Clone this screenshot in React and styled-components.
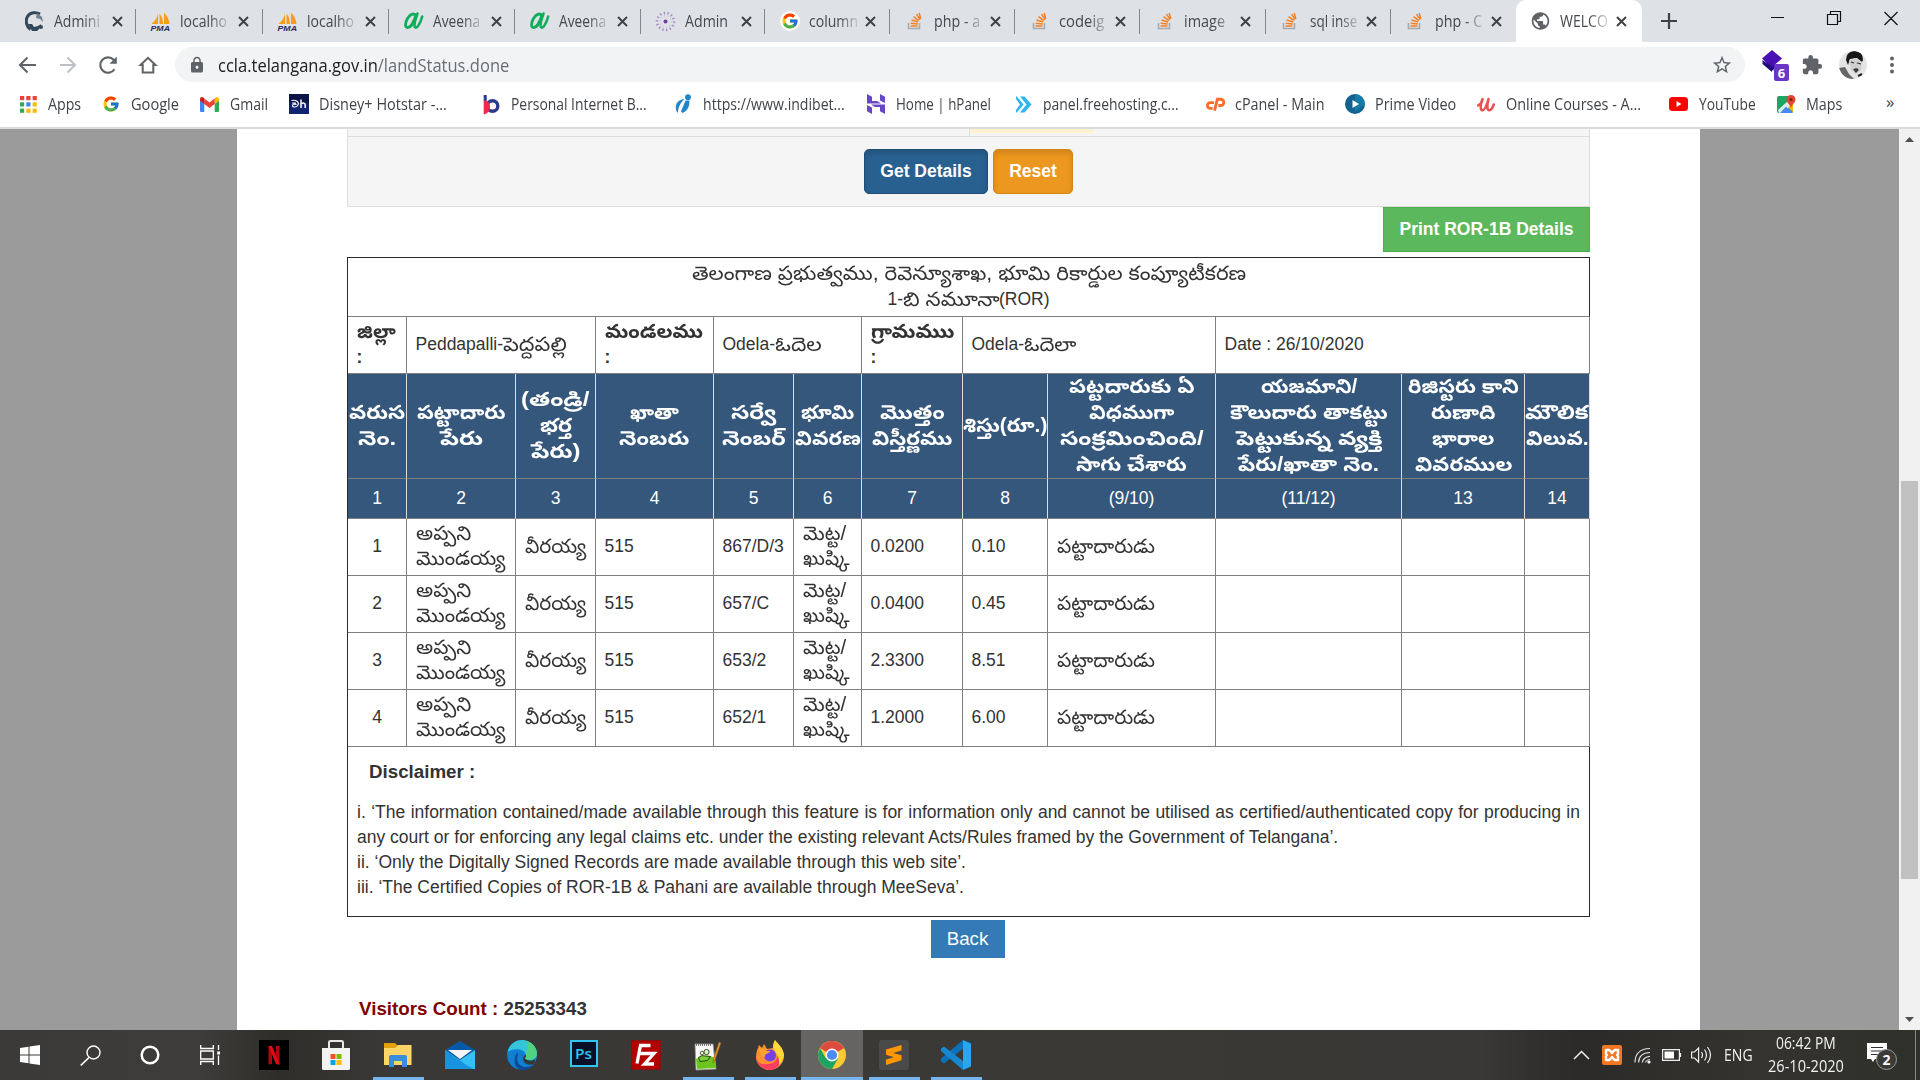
import React, { useLayoutEffect, useRef, useState } from "react";
import styled, { createGlobalStyle, css } from "styled-components";
import { FcGoogle } from "react-icons/fc";
import { MdExtension, MdLock, MdStarBorder, MdPublic } from "react-icons/md";

const Global = createGlobalStyle`
  * { box-sizing: border-box; }
  html, body { margin: 0; padding: 0; overflow: hidden; background: #fff; }
`;

const ui = css`font-family: "Open Sans", "Noto Sans", sans-serif;`;
const doc = css`font-family: "Liberation Sans", "Noto Sans Telugu", "Noto Sans", sans-serif;`;

/* ---------- text that keeps a set measure ---------- */
const FitBox = styled.span`
  display: inline-block;
  white-space: nowrap;
  text-align: left;
  vertical-align: top;
  font-size: ${(p) => (p.$te ? "19.5px" : "inherit")};
`;
const FitInner = styled.span`
  display: inline-block;
  white-space: pre;
  transform-origin: 0 50%;
`;
function Fit({ w, te, children }) {
  const ref = useRef(null);
  const [k, setK] = useState(1);
  useLayoutEffect(() => {
    const n = ref.current.offsetWidth;
    if (n) setK(w / n);
  }, [w, children]);
  return (
    <FitBox $te={te} style={{ width: w }}>
      <FitInner ref={ref} style={{ transform: `scaleX(${k})` }}>{children}</FitInner>
    </FitBox>
  );
}

/* ---------- shell ---------- */
const Screen = styled.div`
  width: 1920px;
  height: 1080px;
  display: flex;
  flex-direction: column;
  overflow: hidden;
  background: #fff;
`;

/* ---------- tab strip ---------- */
const TabStrip = styled.div`
  ${ui}
  height: 42px;
  flex: none;
  display: flex;
  background: #dee1e6;
  padding-left: 10px;
  color: #45494d;
`;
const TabItem = styled.div`
  flex: none;
  width: ${(p) => p.$w}px;
  height: 42px;
  padding-left: 14px;
  display: flex;
  align-items: center;
  background: ${(p) => (p.$active ? "#fff" : "transparent")};
  border-radius: ${(p) => (p.$active ? "10px 10px 0 0" : "0")};
`;
const TabIcon = styled.span`
  width: 21px;
  height: 21px;
  display: flex;
  align-items: center;
  justify-content: center;
`;
const TabText = styled.span`
  margin-left: 9px;
  width: 49px;
  font-size: 15.5px;
  line-height: 24px;
  white-space: nowrap;
  mask-image: ${(p) => (p.$solid ? "none" : "linear-gradient(90deg, #000 60%, rgba(0,0,0,.15) 100%)")};
`;
const TabClose = styled.svg`
  margin-left: ${(p) => p.$gap}px;
  width: 11px;
  height: 11px;
  flex: none;
`;
const TabRule = styled.span`
  width: 1px;
  height: 25px;
  margin-left: auto;
  background: ${(p) => (p.$hide ? "transparent" : "#83868b")};
`;
const NewTab = styled.svg`
  width: 16px;
  height: 16px;
  margin: 13px 0 0 19px;
`;
const WindowButtons = styled.svg`
  margin-left: auto;
  width: 160px;
  height: 42px;
`;

/* ---------- toolbar ---------- */
const Toolbar = styled.div`
  ${ui}
  flex: none;
  height: 45px;
  padding: 0 10px 0 17px;
  display: flex;
  align-items: center;
`;
const NavIcon = styled.svg`
  width: 20px;
  height: 20px;
  margin-right: ${(p) => p.$gap || 20.4}px;
  flex: none;
`;
const Omnibox = styled.div`
  flex: none;
  width: 1570px;
  height: 35px;
  border-radius: 18px;
  background: #f1f3f4;
  display: flex;
  align-items: center;
  padding: 0 12px 0 13px;
  color: #5f6368;
  font-size: 18px;
  & > svg:last-child { margin-left: auto; }
`;
const Url = styled.span`
  margin-left: 12px;
  line-height: 30px;
  color: #6a6e73;
`;
const Host = styled.span`color: #202124;`;
const ExtArea = styled.div`
  display: flex;
  align-items: center;
  margin-left: 16px;
`;

/* ---------- bookmarks ---------- */
const Bookmarks = styled.div`
  ${ui}
  flex: none;
  height: 42px;
  padding: 0 0 6px 18px;
  display: flex;
  align-items: center;
  border-bottom: 2px solid #dadce0;
  color: #3f4347;
  font-size: 15.5px;
`;
const Bookmark = styled.div`
  flex: none;
  width: ${(p) => p.$w}px;
  display: flex;
  align-items: center;
  line-height: 24px;
`;
const BookIcon = styled.span`
  width: 20px;
  height: 20px;
  margin-right: 10px;
  display: flex;
  align-items: center;
  justify-content: center;
`;
const More = styled.span`
  font-size: 17px;
  line-height: 20px;
  margin-top: -5px;
  color: #3c4043;
`;

/* ---------- page ---------- */
const Viewport = styled.div`
  ${doc}
  flex: none;
  height: 901px;
  display: flex;
  background: #9b9b9b;
  color: #333;
  font-size: 17.5px;
  line-height: 25px;
`;
const Sheet = styled.main`
  width: 1463px;
  margin-left: 237px;
  padding-left: 110px;
  background: #fff;
`;
const Content = styled.div`
  width: 1243px;
  display: flex;
  flex-direction: column;
`;
const FormTail = styled.div`
  height: 8px;
  display: flex;
  background: #f5f5f5;
  border: 1px solid #ddd;
  border-top: 0;
`;
const FormTailLeft = styled.div`
  width: 622px;
  border-right: 1px solid #ddd;
`;
const Field = styled.div`
  width: 123px;
  height: 4px;
  background: #fff2cc;
`;
const Actions = styled.div`
  height: 70px;
  border: 1px solid #ddd;
  border-top: 0;
  background: #f5f5f5;
  display: flex;
  gap: 5px;
  justify-content: center;
  padding-top: 12px;
`;
const Button = styled.button`
  ${doc}
  height: ${(p) => p.$h || 45}px;
  width: ${(p) => p.$w}px;
  padding: 0;
  font-size: ${(p) => p.$size || 17.5}px;
  font-weight: ${(p) => p.$weight || 700};
  color: #fff;
  background: ${(p) => p.$bg};
  border: 1px solid ${(p) => p.$line};
  border-radius: ${(p) => (p.$round ? "5px" : "0")};
  box-shadow: ${(p) => (p.$round ? "inset 0 3px 5px rgba(0,0,0,.125)" : "none")};
`;
const PrintRow = styled.div`
  display: flex;
  justify-content: flex-end;
  height: 50px;
`;

const Sheet1B = styled.table`
  width: 1243px;
  table-layout: fixed;
  border-collapse: separate;
  border-spacing: 0;
  border-top: 1px solid #2a2a2a;
  border-left: 1px solid #2a2a2a;
`;
const Cell = styled.td`
  height: ${(p) => p.$h}px;
  padding: 0 0 2px ${(p) => (p.$center ? 0 : 8.5)}px;
  text-align: ${(p) => (p.$center ? "center" : "left")};
  font-weight: ${(p) => (p.$bold ? 700 : 400)};
  border-right: 1px solid ${(p) => (p.$edge ? "#2a2a2a" : "#808080")};
  border-bottom: 1px solid #808080;
  vertical-align: middle;
`;
const HeadCell = styled.th`
  height: ${(p) => p.$h}px;
  padding: 0;
  background: #34577b;
  color: #fff;
  font-weight: ${(p) => (p.$plain ? 400 : 700)};
  border-right: 1px solid #ddd;
  border-bottom: 1px solid #808080;
`;
const Lines = styled.div`
  display: flex;
  flex-direction: column;
  align-items: ${(p) => (p.$center ? "center" : "flex-start")};
  line-height: ${(p) => p.$lh || 26}px;
  margin-top: ${(p) => (p.$up ? -2 : 0)}px;
`;
const Mixed = styled.span`
  display: flex;
`;
const Note = styled.td`
  height: 170px;
  padding: 12px 9px 0 8px;
  vertical-align: top;
  border-right: 1px solid #2a2a2a;
  border-bottom: 1px solid #2a2a2a;
`;
const NoteTitle = styled.div`
  font-size: 18.75px;
  font-weight: 700;
  padding-left: 13px;
  margin-bottom: 16px;
`;
const NoteText = styled.p`
  margin: 0 0 0 1px;
  text-align: justify;
`;
const BackRow = styled.div`
  display: flex;
  justify-content: center;
  padding: 3px 2px 38px 0;
`;
const Visitors = styled.div`
  padding-left: 12px;
  font-size: 18.75px;
  font-weight: 700;
`;
const Maroon = styled.span`color: #800000;`;

const Gutter = styled.div`
  margin-left: auto;
  width: 21px;
  background: #f1f1f1;
  display: flex;
  flex-direction: column;
  align-items: center;
  padding: 8px 0;
  & > svg:last-child { margin-top: auto; }
`;
const Thumb = styled.div`
  width: 17px;
  height: 398px;
  margin-top: 339px;
  background: #c1c1c1;
`;

/* ---------- task bar ---------- */
const Taskbar = styled.div`
  ${ui}
  flex: none;
  height: 50px;
  display: flex;
  background: linear-gradient(90deg, #3b3a38 0, #3d3c3a 200px, #2f2d2a 280px, #393836 380px, #3b3936 1100px, #3a3836 1480px, #2c2a28 1580px, #343330 1750px, #30302b 1920px);
  color: #f2f2f2;
`;
const Slot = styled.div`
  flex: none;
  width: ${(p) => p.$w || 62}px;
  height: 50px;
  display: flex;
  flex-direction: column;
  align-items: center;
  justify-content: space-between;
  padding-top: ${(p) => (p.$t === undefined ? 10 : p.$t)}px;
  background: ${(p) => (p.$active ? "#656462" : "transparent")};
`;
const Running = styled.span`
  width: ${(p) => (p.$wide ? 62 : 51)}px;
  height: 3px;
  background: #76b5ee;
`;
const PinGap = styled.span`width: 3px;`;
const Tray = styled.div`
  margin-left: auto;
  width: 350px;
  display: flex;
  align-items: center;
`;
const Lang = styled.span`
  font-size: 15.5px;
  line-height: 20px;
  margin-left: 12px;
`;
const Clock = styled.div`
  width: 108px;
  margin-left: -1px;
  display: flex;
  flex-direction: column;
  align-items: center;
  font-size: 15.5px;
  line-height: 23px;
`;
const DesktopEdge = styled.span`
  width: 1px;
  height: 50px;
  margin-left: 15px;
  background: #8a8986;
`;

/* ---------- favicons ---------- */
const IconCi = () => (
  <svg width="20" height="21" viewBox="0 0 20 21">
    <path d="M15 3C11 .6 5 1.500 2.500 5.500S1.500 16 5.500 18.500" fill="none" stroke="#33475b" strokeWidth="3" />
    <path d="M3 13h4l2 3 4-1 3-2-1 4-3 3H7z" fill="#33475b" />
    <path d="M12 2l5 4 1 5-3-3-4-1z" fill="#71808f" />
    <circle cx="16" cy="16" r="2" fill="#33475b" />
  </svg>
);
const IconPma = () => (
  <svg width="21" height="21" viewBox="0 0 21 21">
    <path d="M8 1C8 6 5 10 1.500 13H8zM9.500 3v10H13C13 9 12 5 9.500 3zM14 2v11h5.500C19 8 17 4 14 2z" fill="#f89c1c" />
    <text x=".5" y="20.300" fontFamily="Liberation Sans, sans-serif" fontSize="8" fontWeight="700" fontStyle="italic" textLength="19.500" lengthAdjust="spacingAndGlyphs" fill="#2c2b5c">PMA</text>
  </svg>
);
const IconAveen = () => (
  <svg width="21" height="18" viewBox="0 0 21 18">
    <path d="M12.500 3.500C10.500.500 7 2.500 4.500 6.500 2 11 1.800 15 4.300 15.500 7.500 16 11 10 13 3" fill="none" stroke="#0fae5b" strokeWidth="2.800" strokeLinecap="round" />
    <path d="M14.500 1.500C12.500 7 10.500 12.500 11.800 15 13.800 17.500 17.500 11 19.200 4.500" fill="none" stroke="#0fae5b" strokeWidth="2.600" strokeLinecap="round" />
  </svg>
);
const IconSpin = () => (
  <svg width="21" height="21" viewBox="0 0 21 21">
    <circle cx="10.500" cy="10.500" r="8.500" fill="none" stroke="#a08abf" strokeWidth="2.600" strokeDasharray="1.300 2.500" />
    <circle cx="10.500" cy="10.500" r="5.800" fill="none" stroke="#c9b8dc" strokeWidth="1.200" strokeDasharray="1 2.600" />
    <circle cx="10.500" cy="10.500" r="2" fill="#6b3fa0" />
  </svg>
);
const IconG = () => (
  <svg width="20" height="20" viewBox="0 0 20 20">
    <circle cx="10" cy="10" r="10" fill="#fff" />
    <FcGoogle x={1} y={1} size={18} />
  </svg>
);
const IconSo = () => (
  <svg width="16" height="18" viewBox="0 0 16 18">
    <path d="M1.500 11v5.500h11V11" fill="none" stroke="#a7abb0" strokeWidth="1.600" />
    <path d="M3.500 14h7M3.700 11.200l7 .8M4.500 8l6.600 2M6.500 4.700l5.500 4M9.500 2.200l3.700 5.500M12.200 1l1.600 6" stroke="#f48024" strokeWidth="1.500" />
  </svg>
);

const TABS = [
  [126.4, "Admini", 46, IconCi], [126.6, "localho", 47, IconPma], [126.4, "localho", 47, IconPma],
  [126, "Aveena", 47, IconAveen], [125.600, "Aveena", 47, IconAveen], [124.500, "Admin", 43, IconSpin],
  [125, "column", 49, IconG], [125, "php - a", 46, IconSo], [125, "codeig", 45, IconSo], [125.500, "image", 41, IconSo],
  [124.600, "sql inse", 47, IconSo], [125, "php - C", 47, IconSo],
];

const CloseGlyph = ({ gap }) => (
  <TabClose $gap={gap} viewBox="0 0 11 11"><path d="M1 1l9 9M10 1l-9 9" stroke="#3f4347" strokeWidth="2" /></TabClose>
);

/* ---------- bookmark icons ---------- */
const BApps = () => (
  <svg width="17" height="17" viewBox="0 0 17 17">
    {["#ea4335", "#ea4335", "#ea4335", "#34a853", "#4285f4", "#fbbc05", "#34a853", "#fbbc05", "#fbbc05"].map((c, i) => (
      <rect key={i} x={(i % 3) * 6.300} y={Math.floor(i / 3) * 6.300} width="4.200" height="4.200" fill={c} />
    ))}
  </svg>
);
const BGmail = () => (
  <svg width="19" height="15" viewBox="0 0 19 15">
    <path d="M0 3v11a1 1 0 0 0 1 1h3.300V6z" fill="#4285f4" /><path d="M19 3v11a1 1 0 0 1-1 1h-3.300V6z" fill="#34a853" />
    <path d="M14.700 1.500V7L19 3.800V2.200C19 .3 17-.6 15.500.6z" fill="#fbbc04" />
    <path d="M4.300 7V1.500L9.500 5.500l5.200-4V7L9.500 11z" fill="#ea4335" /><path d="M0 2.200v1.600L4.300 7V1.500L3.500.6C2-.6 0 .3 0 2.200z" fill="#c5221f" />
  </svg>
);
const BHot = () => (
  <svg width="20" height="20" viewBox="0 0 20 20"><rect width="20" height="20" fill="#10246b" /><rect width="20" height="9" fill="#0a1446" />
    <path d="M2.500 6.500C7 5.500 10.500 8 9 11c-1.300 2.500-5 2.500-5.500 1s2-2.500 4-1.500M3 9h4" fill="none" stroke="#fff" strokeWidth="1.100" /><path d="M12 5.500v8.500M12 10.500c.8-2 4.200-2 4.200.5v3" fill="none" stroke="#fff" strokeWidth="1.500" /></svg>
);
const BPib = () => (
  <svg width="17" height="21" viewBox="0 0 17 21"><circle cx="9.500" cy="12" r="5.300" fill="none" stroke="#2b3990" strokeWidth="3.400" /><path d="M2.200 1v6" stroke="#2b3990" strokeWidth="3" /><path d="M.7 6.500c4 0 6.300 2 6.300 6s-2 7-6.300 8z" fill="#ee2a4a" /></svg>
);
const BIndi = () => (
  <svg width="17" height="20" viewBox="0 0 17 20"><path d="M9.500 5C4 5.500.5 9 .8 14c.2 2 1 4 2.200 5C3 14 5 9 9.500 5z" fill="#1f86cb" /><path d="M10.500 6.500L6 17.500l1.500 1.500c5-2 7.500-7 6.800-12.500z" fill="#1f86cb" /><circle cx="13" cy="3.200" r="2.900" fill="#1f86cb" /></svg>
);
const BHp = () => (
  <svg width="18" height="20" viewBox="0 0 18 20"><path d="M0 0l5 2.700V7h5l4 2.500H0zM13 0l5 2.700V9l-5-2.500zM18 10.500V20l-5-2.700V13H8l-4-2.500zM0 11l5 2.500V20l-5-2.700z" fill="#6747c7" /></svg>
);
const BFree = () => (
  <svg width="17" height="19" viewBox="0 0 17 19"><path d="M5 1.500h4.500l7 8-7 8H5l6.500-8z" fill="#2fb4ec" /><path d="M1 1l3.500 3.500L8.500 9.500l-4 5L1 18l0-3 4-5.500L1 4z" fill="#2fb4ec" /></svg>
);
const BCp = () => (
  <svg width="21" height="15" viewBox="0 0 21 15"><path d="M9.500 5.500H5.500a3 3 0 0 0 0 6H8M10 14l3-12h3.500a3.300 3.300 0 0 1 0 6.600H14" fill="none" stroke="#ff6c2c" strokeWidth="3" /></svg>
);
const BPrime = () => (
  <svg width="20" height="20" viewBox="0 0 20 20"><circle cx="10" cy="10" r="10" fill="#126390" /><path d="M10 0a10 10 0 0 1 10 10L10 18z" fill="#1786b0" opacity=".7" /><path d="M7.500 6l6.500 4-6.500 4z" fill="#fff" /></svg>
);
const BUd = () => (
  <svg width="18" height="15" viewBox="0 0 18 15"><path d="M1 8.500C3.500 7 5.500 4 5.500 2 3.500 6 3 13 5.200 13.300 7.500 13.500 10 7.500 11.500 2 10 7.500 9.800 13 12 13.300c2 0 3.800-3 4.800-5.800" fill="none" stroke="#ec5252" strokeWidth="2.600" strokeLinecap="round" strokeLinejoin="round" /></svg>
);
const BYt = () => (
  <svg width="19" height="14" viewBox="0 0 19 14"><rect width="19" height="14" rx="3.500" fill="#f00" /><path d="M7.500 4l5 3-5 3z" fill="#fff" /></svg>
);
const BMaps = () => (
  <svg width="19" height="19" viewBox="0 0 19 19"><rect y="1" width="16" height="17" rx="2" fill="#1fa463" /><path d="M2 18L9 10l7 8z" fill="#4a89f3" /><path d="M1 15L13 4l3 2v3L6 18H2z" fill="#fff" opacity=".85" /><path d="M3 18l6-6.500 6 6.500z" fill="#4a89f3" /><path d="M11 12l5 5V9z" fill="#fbbc05" /><path d="M14 0a4.500 4.500 0 0 1 4.500 4.500C18.500 8 15 9 14 13c-1-4-4.500-5-4.500-8.500A4.500 4.500 0 0 1 14 0z" fill="#e94335" /><circle cx="14" cy="4.500" r="1.600" fill="#7d1f17" /></svg>
);

const BOOKS = [
  [82.500, "Apps", 33, BApps], [99, "Google", 48, () => <FcGoogle size={18} />], [89.500, "Gmail", 38, BGmail],
  [192, "Disney+ Hotstar -...", 128, BHot], [192, "Personal Internet B...", 136, BPib],
  [193, "https://www.indibet...", 142, BIndi], [147, "Home | hPanel", 95, BHp],
  [191.500, "panel.freehosting.c...", 136, BFree], [140, "cPanel - Main", 90, BCp], [131.500, "Prime Video", 81, BPrime],
  [192.500, "Online Courses - A...", 135, BUd], [107.500, "YouTube", 57, BYt], [110, "Maps", 36, BMaps],
];

/* ---------- table data ---------- */
const COLS = [59, 109, 80, 118, 80, 68, 101, 85, 168, 186, 123, 65];
const HEAD = [
  [["వరుస", 56], ["నెం.", 38]],
  [["పట్టాదారు", 88], ["పేరు", 43]],
  [["(తండ్రి/", 69], ["భర్త", 32], ["పేరు)", 50]],
  [["ఖాతా", 49], ["నెంబరు", 71]],
  [["సర్వే", 45], ["నెంబర్", 64]],
  [["భూమి", 53], ["వివరణ", 66]],
  [["మొత్తం", 65], ["విస్తీర్ణము", 80]],
  [["శిస్తు(రూ.)", 84]],
  [["పట్టదారుకు ఏ", 125], ["విధముగా", 85], ["సంక్రమించింది/", 144], ["సాగు చేశారు", 111]],
  [["యజమాని/", 96], ["కౌలుదారు తాకట్టు", 158], ["పెట్టుకున్న వ్యక్తి", 146], ["పేరు/ఖాతా నెం.", 141]],
  [["రిజిస్టరు కాని", 111], ["రుణాది", 64], ["భారాల", 62], ["వివరముల", 97]],
  [["మౌలిక", 64], ["విలువ.", 63]],
];
const NUMS = ["1", "2", "3", "4", "5", "6", "7", "8", "(9/10)", "(11/12)", "13", "14"];
const ROWS = [
  ["867/D/3", "0.0200", "0.10"],
  ["657/C", "0.0400", "0.45"],
  ["653/2", "2.3300", "8.51"],
  ["652/1", "1.2000", "6.00"],
];

function RecordTable() {
  return (
    <Sheet1B>
      <colgroup>{COLS.map((w, i) => <col key={i} width={w} />)}</colgroup>
      <tbody>
        <tr>
          <Cell colSpan={12} $h={59} $center $edge>
            <Lines $center>
              <Fit te w={554}>తెలంగాణ ప్రభుత్వము, రెవెన్యూశాఖ, భూమి రికార్డుల కంప్యూటీకరణ</Fit>
              <Mixed>1-<Fit te w={96}>బి నమూనా</Fit>(ROR)</Mixed>
            </Lines>
          </Cell>
        </tr>
        <tr>
          <Cell $h={57} $bold><Lines><Fit te w={39}>జిల్లా</Fit><span>:</span></Lines></Cell>
          <Cell colSpan={2}><Mixed>Peddapalli-<Fit te w={64}>పెద్దపల్లి</Fit></Mixed></Cell>
          <Cell $bold><Lines><Fit te w={98}>మండలము</Fit><span>:</span></Lines></Cell>
          <Cell colSpan={2}><Mixed>Odela-<Fit te w={47}>ఓదెల</Fit></Mixed></Cell>
          <Cell $bold><Lines><Fit te w={83}>గ్రామముు</Fit><span>:</span></Lines></Cell>
          <Cell colSpan={2}><Mixed>Odela-<Fit te w={52}>ఓదెలా</Fit></Mixed></Cell>
          <Cell colSpan={3}>Date : 26/10/2020</Cell>
        </tr>
        <tr>
          {HEAD.map((lines, i) => (
            <HeadCell key={i} $h={105}>
              <Lines $center $up>{lines.map(([t, w]) => <Fit te key={t} w={w}>{t}</Fit>)}</Lines>
            </HeadCell>
          ))}
        </tr>
        <tr>{NUMS.map((n) => <HeadCell key={n} $h={40} $plain>{n}</HeadCell>)}</tr>
        {ROWS.map(([survey, area, tax], i) => (
          <tr key={survey}>
            <Cell $h={57} $center>{i + 1}</Cell>
            <Cell><Lines $lh={25}><Fit te w={55}>అప్పని</Fit><Fit te w={90}>మొండయ్య</Fit></Lines></Cell>
            <Cell><Fit te w={61}>వీరయ్య</Fit></Cell>
            <Cell>515</Cell>
            <Cell>{survey}</Cell>
            <Cell><Lines $lh={25}><Fit te w={43}>మెట్ట/</Fit><Fit te w={47}>ఖుష్కి</Fit></Lines></Cell>
            <Cell>{area}</Cell>
            <Cell>{tax}</Cell>
            <Cell><Fit te w={98}>పట్టాదారుడు</Fit></Cell>
            <Cell /><Cell /><Cell />
          </tr>
        ))}
        <tr>
          <Note colSpan={12}>
            <NoteTitle>Disclaimer :</NoteTitle>
            <NoteText>i. ‘The information contained/made available through this feature is for information only and cannot be utilised as certified/authenticated copy for producing in any court or for enforcing any legal claims etc. under the existing relevant Acts/Rules framed by the Government of Telangana’.</NoteText>
            <NoteText>ii. ‘Only the Digitally Signed Records are made available through this web site’.</NoteText>
            <NoteText>iii. ‘The Certified Copies of ROR-1B &amp; Pahani are available through MeeSeva’.</NoteText>
          </Note>
        </tr>
      </tbody>
    </Sheet1B>
  );
}

/* ---------- task bar icons ---------- */
const TWin = () => <svg width="20" height="20" viewBox="0 0 20 20"><path d="M0 3l8.500-1.300v7.800H0zM9.500 1.500L20 0v9.500H9.500zM0 10.500h8.500v7.800L0 17zM9.500 10.500H20V20L9.500 18.500z" fill="#fff" /></svg>;
const TSearch = () => <svg width="21" height="21" viewBox="0 0 21 21"><circle cx="13.500" cy="7.500" r="6.500" fill="none" stroke="#fff" strokeWidth="1.400" /><path d="M9 12.500L.8 20.300" stroke="#fff" strokeWidth="1.600" /></svg>;
const TCort = () => <svg width="20" height="20" viewBox="0 0 20 20"><circle cx="10" cy="10" r="8.300" fill="none" stroke="#fff" strokeWidth="2.500" /></svg>;
const TView = () => <svg width="20" height="20" viewBox="0 0 20 20"><path d="M.7 0v3.500h12.600V0M.7 20v-3.500h12.600V20M.7 6h12.600v8H.7zM18.500 0v5M18.500 10.500V20" fill="none" stroke="#fff" strokeWidth="1.300" /><rect x="17.200" y="6.500" width="2.800" height="3" fill="#fff" /></svg>;
const TNet = () => <svg width="30" height="30" viewBox="0 0 30 30"><rect width="30" height="30" fill="#000" /><path d="M9.500 6h3.500v18l-3.500.5zM17 6h3.500v18.500L17 24z" fill="#b1060f" /><path d="M9.500 6H13l7.500 18.500L17 24z" fill="#e50914" /></svg>;
const TStore = () => <svg width="30" height="30" viewBox="0 0 30 30"><path d="M8 9V2.500Q8 1 9.500 1h11Q22 1 22 2.500V9" fill="none" stroke="#e8e8e8" strokeWidth="2" /><path d="M1 8h28v20.500q0 1.500-1.500 1.500h-25Q1 30 1 28.500z" fill="#f3f3f3" /><rect x="9.500" y="14" width="5" height="5" fill="#f25022" /><rect x="15.500" y="14" width="5" height="5" fill="#7fba00" /><rect x="9.500" y="20" width="5" height="5" fill="#00a4ef" /><rect x="15.500" y="20" width="5" height="5" fill="#ffb900" /></svg>;
const TFolder = () => <svg width="28" height="24" viewBox="0 0 28 24"><path d="M0 0h11l3 3v4H0z" fill="#e3a008" /><path d="M0 5h11l3-3h13.500v20H0z" fill="#fdd466" /><path d="M5 24V14q0-2 2-2h14q2 0 2 2v10h-5v-6h-8v6z" fill="#3a8dde" /></svg>;
const TMail = () => <svg width="30" height="28" viewBox="0 0 30 28"><path d="M0 9L15 0l15 9-15 10z" fill="#0559a8" /><path d="M3 9h24L15 18z" fill="#f4f4f6" /><path d="M0 9l15 10L30 9v19H0z" fill="#35c0f3" /><path d="M0 9l20 14 8 5H0z" fill="#1793df" /></svg>;
const TEdge = () => <svg width="30" height="30" viewBox="0 0 30 30"><circle cx="15" cy="15" r="15" fill="#0f7fd3" /><path d="M.5 12C3 2 12-1 18 .4 26 2 31 9 29.800 15c-1 5-7 6-11.500 4-1-1 1-2 .5-4.500C18 9 7 7 .5 12z" fill="#35c4d8" /><path d="M18 .4C26 2 31 9 29.800 15c-1 5-7 6-11.500 4-1-1 1-2 .5-4.500C19 9 24 6 18 .4z" fill="#58d867" opacity=".75" /><path d="M11 15c-3 6 2 12 8 12 3 0 6-1 8-3-3 5-8 6.500-13 6C7 28 5 18 11 12z" fill="#0c4c94" /><path d="M18.800 14.500c1 2-1.500 3.500-.5 4.500 3 2.500 7 2 10 .5l-1 4c-4 2.500-9 1-10.500-2-1-3-1-5 2-7z" fill="#363634" /></svg>;
const TPs = () => <svg width="28" height="27" viewBox="0 0 28 27"><rect x="1" y="1" width="26" height="25" fill="#0b1029" stroke="#31c5f0" strokeWidth="2" /><text x="5" y="19" fontFamily="Open Sans, sans-serif" fontSize="15" fontWeight="600" textLength="17" lengthAdjust="spacingAndGlyphs" fill="#31c5f0">Ps</text></svg>;
const TFz = () => <svg width="30" height="30" viewBox="0 0 30 30"><rect x=".8" y=".8" width="28.400" height="28.400" fill="#b50000" stroke="#a00000" strokeWidth="1.500" strokeDasharray="2 1.500" /><path d="M6 23.500L9.500 5.500h10M8 13.500h7M14 13.500h9L13.500 24h9.500" fill="none" stroke="#fff" strokeWidth="3.300" /></svg>;
const TNpp = () => <svg width="30" height="30" viewBox="0 0 30 30"><path d="M2 3h18l3 25-20 1z" fill="#f7f7f7" stroke="#999" strokeWidth=".8" /><path d="M3 18q10-6 19-1l1 10-19 1z" fill="#6cc51c" /><path d="M3 4h16" stroke="#777" strokeWidth="2" strokeDasharray="1 1" /><circle cx="13.500" cy="11" r="2.600" fill="#dff5c0" stroke="#3b4a20" /><circle cx="9" cy="12" r="1.800" fill="#dff5c0" stroke="#3b4a20" strokeWidth=".8" /><path d="M5.500 16.500q3-3 7-1.500l5 .5-3 4-7.500 1z" fill="#7bd03a" stroke="#2c4513" /><path d="M28 2l-6 17-2 3 .3-4L26 1z" fill="#e8962e" stroke="#80501a" strokeWidth=".5" /></svg>;
const TFf = () => <svg width="30" height="30" viewBox="0 0 30 30"><path d="M3 8l1-3 3 3 2-4 3 5 6-1c0-4 1-6 2-8 2 3 8 7 9 15 .5 8-6 15-14 15S1 24 1 17c0-4 1-6 2-9z" fill="#ff9133" /><path d="M1 16c1 8 7 9 12 8 7 0 9-5 10-9l3 3c0 7-5 12-11 12S1 25 1 16z" fill="#ff3f5f" /><path d="M18 8c0-4 1-6 2-8 2 3 8 7 9 15-1 6-3 8-5 10 1-8-2-10-6-17z" fill="#ffd83b" /><circle cx="15" cy="15.500" r="6" fill="#7542e5" /><path d="M4 9c4-1 6 1 8 2l3 0c0 3-6 2-5 6-4 0-5-4-6-8z" fill="#ffa22e" /></svg>;
const TChrome = () => <svg width="28" height="28" viewBox="0 0 28 28"><circle cx="14" cy="14" r="14" fill="#fbc934" /><path d="M14 14L1.900 7A14 14 0 0 1 26.100 7z" fill="#dd4b3e" /><path d="M1.900 7A14 14 0 0 0 14 28l6-10.500H8z" fill="#1da362" /><circle cx="14" cy="14" r="6.500" fill="#fff" /><circle cx="14" cy="14" r="5.100" fill="#4c8bf5" /></svg>;
const TSub = () => <svg width="30" height="30" viewBox="0 0 30 30"><rect width="30" height="30" rx="2.500" fill="#4a4a4a" /><path d="M7 9.500L22.500 5v5.500L14 13l8.500 2.300v5L7 25v-5.500l8-2.300-8-2.500z" fill="#ff9800" /></svg>;
const TVs = () => <svg width="30" height="30" viewBox="0 0 30 30"><path d="M22 0L0 18.500v3L3 23.500 22 9z" fill="#0b70b8" /><path d="M22 30L0 11V8.500L3 6.500 22 21z" fill="#1688d0" /><path d="M22 0l8 3.500v23L22 30z" fill="#29a6f0" /></svg>;

const PINS = [
  [TNet, 0, 10], [TStore, 0, 10], [TFolder, 1, 13], [TMail, 0, 11], [TEdge, 0, 10], [TPs, 0, 10], [TFz, 0, 10],
  [TNpp, 1, 11], [TFf, 1, 10], [TChrome, 2, 11], [TSub, 1, 10], [TVs, 1, 10],
];

export default function App() {
  return (
    <Screen>
      <Global />
      <TabStrip>
        {TABS.map(([w, t, tw, Icon], i) => (
          <TabItem key={i} $w={w}>
            <TabIcon><Icon /></TabIcon>
            <TabText $solid={i === 5}><Fit w={tw}>{t}</Fit></TabText>
            <CloseGlyph gap={i < 5 ? 9 : 7} />
            <TabRule $hide={i === 11} />
          </TabItem>
        ))}
        <TabItem $w={126} $active>
          <TabIcon><MdPublic size={22} color="#5f6368" /></TabIcon>
          <TabText><Fit w={48}>WELCO</Fit></TabText>
          <CloseGlyph gap={7} />
        </TabItem>
        <NewTab viewBox="0 0 16 16"><path d="M8 0v16M0 8h16" stroke="#3f4347" strokeWidth="2.200" /></NewTab>
        <WindowButtons viewBox="0 0 160 42">
          <path d="M11 17.500h13M67.500 14.500h10v10h-10zM70.500 14v-2.500h10v10H78M124.500 12l13 13M137.500 12l-13 13" fill="none" stroke="#111" strokeWidth="1.200" />
        </WindowButtons>
      </TabStrip>

      <Toolbar>
        <NavIcon viewBox="0 0 20 20"><path d="M19 10H3M10.500 2.500L3 10l7.500 7.500" fill="none" stroke="#5f6368" strokeWidth="2" /></NavIcon>
        <NavIcon viewBox="0 0 20 20"><path d="M3 10h15M10.500 2.500L18 10l-7.500 7.500" fill="none" stroke="#bdc1c6" strokeWidth="2" /></NavIcon>
        <NavIcon viewBox="0 0 20 20"><path d="M16.500 14.200A7.700 7.700 0 1 1 15.800 5" fill="none" stroke="#5f6368" strokeWidth="2.100" /><path d="M18.800 1.500v7.300h-7.300z" fill="#5f6368" /></NavIcon>
        <NavIcon $gap={16.8} viewBox="0 0 20 20"><path d="M2.500 10L10 2.800l7.500 7.200H15.300v7.500H4.700V10z" fill="none" stroke="#5f6368" strokeWidth="2" /></NavIcon>
        <Omnibox>
          <MdLock size={18} />
          <Url><Fit w={291}><Host>ccla.telangana.gov.in</Host>/landStatus.done</Fit></Url>
          <MdStarBorder size={22} />
        </Omnibox>
        <ExtArea>
          <svg width="30" height="34" viewBox="0 0 30 34">
            <path d="M2 11l10 12 2-5V12z" fill="#1f0a7c" /><path d="M11 2l10 8.500L11 19 1 10.500z" fill="#4a0fb3" /><path d="M1.500 12v4l9.500 8v-4.500z" fill="#1f0a7c" />
            <rect x="13" y="16" width="15" height="17" rx="2" fill="#6b35c6" />
            <text x="20.500" y="30" textAnchor="middle" fontFamily="Open Sans, sans-serif" fontSize="13" fontWeight="700" fill="#fff">6</text>
          </svg>
          <svg width="22" height="22" viewBox="0 0 24 24" style={{ marginLeft: 10 }}><MdExtension size={24} color="#5f6368" /></svg>
          <svg width="28" height="28" viewBox="0 0 28 28" style={{ marginLeft: 16 }}>
            <defs><clipPath id="face"><circle cx="14" cy="14" r="14" /></clipPath></defs>
            <g clipPath="url(#face)">
              <rect width="28" height="28" fill="#e4e4e4" />
              <path d="M0 17l6-1 4 7 5 5H0z" fill="#666" />
              <path d="M7 9q0-8 8-9 9 0 9 9l-1 2-5-4-7 1-2 6z" fill="#171717" />
              <path d="M10 9l6-2 7 4-1 8-5 4-5-4z" fill="#cfcfcf" />
              <path d="M12 11l3 1M18 12l4 1M15 18.500q3-1.500 4 .5l-2 2z" stroke="#333" strokeWidth="1.200" fill="#555" />
              <path d="M19 25l4-2" stroke="#222" strokeWidth="2" />
            </g>
          </svg>
          <svg width="6" height="18" viewBox="0 0 6 18" style={{ marginLeft: 22 }}><g fill="#5f6368"><circle cx="3" cy="2.500" r="2" /><circle cx="3" cy="9" r="2" /><circle cx="3" cy="15.500" r="2" /></g></svg>
        </ExtArea>
      </Toolbar>

      <Bookmarks>
        {BOOKS.map(([w, t, tw, Icon]) => (
          <Bookmark key={t} $w={w}>
            <BookIcon><Icon /></BookIcon>
            <Fit w={tw}>{t}</Fit>
          </Bookmark>
        ))}
        <More>»</More>
      </Bookmarks>

      <Viewport>
        <Sheet>
          <Content>
            <FormTail><FormTailLeft /><Field /></FormTail>
            <Actions>
              <Button $w={124} $bg="#286090" $line="#204d74" $round>Get Details</Button>
              <Button $w={80} $bg="#ec971f" $line="#d58512" $round>Reset</Button>
            </Actions>
            <PrintRow><Button $w={207} $bg="#5cb85c" $line="#4cae4c">Print ROR-1B Details</Button></PrintRow>
            <RecordTable />
            <BackRow><Button $w={74} $h={38} $size={18.75} $weight={400} $bg="#337ab7" $line="#337ab7">Back</Button></BackRow>
            <Visitors><Maroon>Visitors Count :</Maroon> 25253343</Visitors>
          </Content>
        </Sheet>
        <Gutter>
          <svg width="9" height="5" viewBox="0 0 9 5"><path d="M0 5l4.500-5L9 5z" fill="#505050" /></svg>
          <Thumb />
          <svg width="9" height="5" viewBox="0 0 9 5"><path d="M0 0l4.500 5L9 0z" fill="#505050" /></svg>
        </Gutter>
      </Viewport>

      <Taskbar>
        {[TWin, TSearch, TCort, TView].map((I, i) => <Slot key={i} $w={60} $t={15}><I /></Slot>)}
        <PinGap />
        {PINS.map(([I, state, top], i) => (
          <Slot key={i} $w={62} $active={state === 2} $t={top}>
            <I />
            {state > 0 && <Running $wide={state === 2} />}
          </Slot>
        ))}
        <Tray>
          <svg width="17" height="10" viewBox="0 0 17 10" style={{ marginLeft: 3 }}><path d="M1 9l7.500-7.500L16 9" fill="none" stroke="#eee" strokeWidth="1.500" /></svg>
          <svg width="20" height="20" viewBox="0 0 20 20" style={{ marginLeft: 12 }}><rect width="20" height="20" rx="2" fill="#f37623" /><path d="M4 5h3.500L10 8l2.500-3H16v4l-1 1 1 1v4h-3.500L10 12l-2.500 3H4v-4l1-1-1-1z" fill="none" stroke="#fff" strokeWidth="2.400" strokeLinejoin="round" /></svg>
          <svg width="17" height="17" viewBox="0 0 17 17" style={{ marginLeft: 12 }}><g fill="none" stroke="#ddd" strokeWidth="1.200"><path d="M1 15.500Q1 2 16 1.500M4.500 15.500Q5 6 16 5.500M8.300 15.500Q9 10 16 9.300M11.500 15.500q.5-2.500 4.500-3" /></g><circle cx="15" cy="15" r="1.600" fill="#fff" /></svg>
          <svg width="20" height="12" viewBox="0 0 20 12" style={{ marginLeft: 11 }}><path d="M.6.600h16.800v10.800H.6zM18.500 4v4" fill="none" stroke="#eee" strokeWidth="1.200" /><rect x="2.500" y="2.500" width="9.500" height="7" fill="#fff" /></svg>
          <svg width="21" height="18" viewBox="0 0 21 18" style={{ marginLeft: 9 }}><path d="M.6 6h3l4-4v14l-4-4h-3zM10.500 6q2 3 0 6M13.500 3.500q4 5.500 0 11M16.500 1q6 8 0 16" fill="none" stroke="#eee" strokeWidth="1.200" /></svg>
          <Lang><Fit w={29}>ENG</Fit></Lang>
          <Clock><Fit w={60}>06:42 PM</Fit><Fit w={76}>26-10-2020</Fit></Clock>
          <svg width="34" height="32" viewBox="0 0 34 32" style={{ marginLeft: 3 }}>
            <path d="M4 4h20v16H12l-2 3-2-3H4z" fill="#fff" /><path d="M8 8.500h12M8 12h12M8 15.500h8" stroke="#333" strokeWidth="1.200" />
            <circle cx="23.500" cy="20.500" r="10" fill="#3a3a37" stroke="#9a9a98" strokeWidth="1" />
            <text x="23.500" y="25.500" textAnchor="middle" fontFamily="Open Sans, sans-serif" fontSize="14" fontWeight="700" fill="#fff">2</text>
          </svg>
          <DesktopEdge style={{ marginLeft: 18 }} />
        </Tray>
      </Taskbar>
    </Screen>
  );
}
